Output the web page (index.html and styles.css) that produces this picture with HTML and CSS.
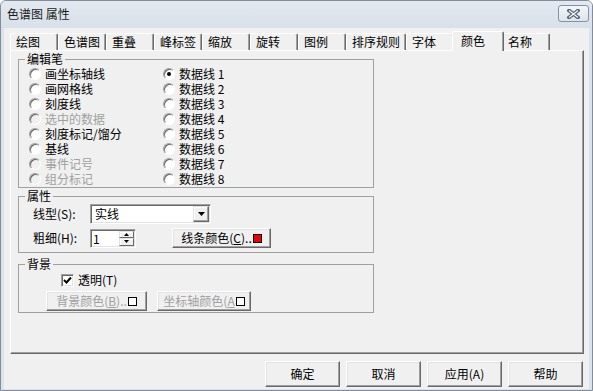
FILE: index.html
```html
<!DOCTYPE html>
<html lang="zh-CN">
<head>
    <meta charset="UTF-8">
    <title>色谱图 属性</title>
    <link rel="stylesheet" href="styles.css">
</head>
<body>
    <div class="window">
        <div class="titlebar">
            <span class="title">色谱图 属性</span>
            <div class="close">
                <svg width="13" height="10" viewBox="0 0 13 10">
                    <path d="M2 1.5 L11 8.5 M11 1.5 L2 8.5" stroke="#56616f" stroke-width="3.6" stroke-linecap="square"/>
                    <path d="M2 1.5 L11 8.5 M11 1.5 L2 8.5" stroke="#eef1f5" stroke-width="1.4"/>
                </svg>
            </div>
        </div>
        <div class="client">
            <div class="tabs">
                <div class="tab">绘图</div>
                <div class="tab">色谱图</div>
                <div class="tab">重叠</div>
                <div class="tab">峰标签</div>
                <div class="tab">缩放</div>
                <div class="tab">旋转</div>
                <div class="tab">图例</div>
                <div class="tab">排序规则</div>
                <div class="tab">字体</div>
                <div class="tab active">颜色</div>
                <div class="tab">名称</div>
            </div>

            <div class="panel">
                <fieldset class="group group-pen">
                    <legend>编辑笔</legend>
                    <div class="pen-cols">
                        <div class="col">
                            <label class="opt"><span class="radio"></span>画坐标轴线</label>
                            <label class="opt"><span class="radio"></span>画网格线</label>
                            <label class="opt"><span class="radio"></span>刻度线</label>
                            <label class="opt disabled"><span class="radio"></span>选中的数据</label>
                            <label class="opt"><span class="radio"></span>刻度标记/馏分</label>
                            <label class="opt"><span class="radio"></span>基线</label>
                            <label class="opt disabled"><span class="radio"></span>事件记号</label>
                            <label class="opt disabled"><span class="radio"></span>组分标记</label>
                        </div>
                        <div class="col">
                            <label class="opt"><span class="radio checked"></span>数据线 1</label>
                            <label class="opt"><span class="radio"></span>数据线 2</label>
                            <label class="opt"><span class="radio"></span>数据线 3</label>
                            <label class="opt"><span class="radio"></span>数据线 4</label>
                            <label class="opt"><span class="radio"></span>数据线 5</label>
                            <label class="opt"><span class="radio"></span>数据线 6</label>
                            <label class="opt"><span class="radio"></span>数据线 7</label>
                            <label class="opt"><span class="radio"></span>数据线 8</label>
                        </div>
                    </div>
                </fieldset>

                <fieldset class="group group-props">
                    <legend>属性</legend>
                    <div class="row">
                        <span class="lbl">线型(S):</span>
                        <div class="combo">
                            <span class="combo-text">实线</span>
                            <span class="combo-btn">
                                <svg width="7" height="4" viewBox="0 0 7 4"><path d="M0 0 H7 L3.5 4 Z" fill="#000"/></svg>
                            </span>
                        </div>
                    </div>
                    <div class="row row-gap">
                        <span class="lbl">粗细(H):</span>
                        <div class="spin">
                            <span class="spin-text">1</span>
                            <span class="spin-btns">
                                <span class="spin-btn"><svg width="5" height="3" viewBox="0 0 5 3"><path d="M2.5 0 L5 3 H0 Z" fill="#000"/></svg></span>
                                <span class="spin-btn"><svg width="5" height="3" viewBox="0 0 5 3"><path d="M0 0 H5 L2.5 3 Z" fill="#000"/></svg></span>
                            </span>
                        </div>
                        <div class="btn btn-line">线条颜色(<u>C</u>)..<span class="swatch red"></span></div>
                    </div>
                </fieldset>

                <fieldset class="group group-bg">
                    <legend>背景</legend>
                    <label class="check-row">
                        <span class="checkbox">
                            <svg width="9" height="9" viewBox="0 0 9 9"><path d="M1 4 L3.5 6.5 L8 1.5" stroke="#000" stroke-width="2" fill="none"/></svg>
                        </span>透明(T)
                    </label>
                    <div class="bg-buttons">
                        <div class="btn disabled btn-bg">背景颜色(<u>B</u>)..<span class="swatch"></span></div>
                        <div class="btn disabled btn-axis">坐标轴颜色(<u>A</u><span class="swatch"></span></div>
                    </div>
                </fieldset>
            </div>

            <div class="actions">
                <div class="btn btn-dlg">确定</div>
                <div class="btn btn-dlg">取消</div>
                <div class="btn btn-dlg">应用(A)</div>
                <div class="btn btn-dlg">帮助</div>
            </div>
        </div>
    </div>
</body>
</html>
```

FILE: styles.css
```css
body {
    margin: 0;
    font-family: "Noto Sans CJK SC", "Noto Sans", sans-serif;
    font-size: 12px;
    line-height: 14px;
    color: #000;
    background: #fff;
}
.window {
    width: 593px;
    height: 391px;
    box-sizing: border-box;
    border: 1px solid #838c97;
    border-radius: 6px 6px 0 0;
    background: #dae2ec;
    display: flex;
    flex-direction: column;
    overflow: hidden;
}
.titlebar {
    height: 27px;
    flex: none;
    display: flex;
    justify-content: space-between;
    align-items: flex-start;
    padding: 0 3px 0 6px;
    background: linear-gradient(#e3e9f0, #d8e0ea);
}
.title {
    margin-top: 6px;
    color: #1b1b1b;
}
.close {
    width: 31px;
    height: 17px;
    margin-top: 4px;
    box-sizing: border-box;
    border: 1px solid #8592a3;
    border-radius: 3px;
    background: linear-gradient(#f3f6f9, #dde4ec);
    display: flex;
    align-items: center;
    justify-content: center;
}
.client {
    flex: 1;
    margin: 0 3px 1px;
    padding: 3px 5px 2px 6px;
    background: #f0f0f0;
    display: flex;
    flex-direction: column;
}

/* tabs */
.tabs {
    display: flex;
    align-items: flex-end;
    height: 20px;
    margin-bottom: -1px;
}
.tab {
    height: 18px;
    min-width: 48px;
    box-sizing: border-box;
    padding: 0 5px;
    line-height: 16px;
    border-top: 1px solid #fff;
    border-left: 1px solid #fff;
    border-right: 1px solid #696969;
    border-radius: 2px 2px 0 0;
    box-shadow: inset -1px 0 #a0a0a0;
    white-space: nowrap;
}
.tab.active {
    height: 20px;
    min-width: 52px;
    margin: 0 -2px;
    padding-left: 8px;
    line-height: 18px;
    background: #f0f0f0;
    position: relative;
    z-index: 1;
}
.panel {
    height: 304px;
    box-sizing: border-box;
    border-top: 1px solid #fff;
    border-left: 1px solid #fff;
    border-right: 1px solid #696969;
    border-bottom: 1px solid #696969;
    box-shadow: inset -1px -1px #a0a0a0;
    background: #f0f0f0;
}

/* group boxes */
.group {
    width: 356px;
    box-sizing: border-box;
    margin: 0 0 0 7px;
    padding: 0;
    border: 1px solid #a0a0a0;
    min-inline-size: 0;
}
.group legend {
    line-height: 14px;
    padding: 0 2px;
    margin-left: 6px;
}
.group-pen {
    margin-top: 1px;
    padding-bottom: 1px;
}
.group-props {
    margin-top: 1px;
    padding-bottom: 4px;
}
.group-bg {
    margin-top: 4px;
    padding-bottom: 1px;
}
.pen-cols {
    display: flex;
    padding-left: 10px;
}
.col {
    width: 134px;
}
.opt {
    display: flex;
    align-items: center;
    gap: 4px;
    height: 15px;
    line-height: 15px;
    white-space: nowrap;
}
.opt.disabled {
    color: #a0a0a0;
}
.radio {
    width: 12px;
    height: 12px;
    box-sizing: border-box;
    border-radius: 50%;
    border: 1px solid;
    border-color: #a0a0a0 #fff #fff #a0a0a0;
    box-shadow: inset 1px 1px #696969;
    background: #fff;
    display: flex;
    align-items: center;
    justify-content: center;
}
.opt.disabled .radio {
    background: #f0f0f0;
}
.radio.checked::after {
    content: "";
    width: 4px;
    height: 4px;
    border-radius: 50%;
    background: #000;
}

/* properties */
.row {
    display: flex;
    align-items: center;
    height: 20px;
    margin-top: 1px;
    padding-left: 14px;
}
.row-gap {
    margin-top: 4px;
}
.lbl {
    width: 57px;
    white-space: nowrap;
}
.combo {
    width: 121px;
    height: 20px;
    box-sizing: border-box;
    padding: 1px 1px 1px 4px;
    border: 1px solid;
    border-color: #a0a0a0 #fff #fff #a0a0a0;
    box-shadow: inset 1px 1px #696969, inset -1px -1px #e3e3e3;
    background: #fff;
    display: flex;
    align-items: center;
}
.combo-btn {
    margin-left: auto;
    width: 16px;
    height: 16px;
    box-sizing: border-box;
    border: 1px solid;
    border-color: #e3e3e3 #696969 #696969 #e3e3e3;
    box-shadow: inset -1px -1px #a0a0a0, inset 1px 1px #fff;
    background: #f0f0f0;
    display: flex;
    align-items: center;
    justify-content: center;
}
.spin {
    width: 46px;
    height: 19px;
    box-sizing: border-box;
    padding: 1px;
    border: 1px solid;
    border-color: #a0a0a0 #fff #fff #a0a0a0;
    box-shadow: inset 1px 1px #696969, inset -1px -1px #e3e3e3;
    background: #fff;
    display: flex;
}
.spin-text {
    flex: 1;
    padding-left: 1px;
    line-height: 15px;
}
.spin-btns {
    width: 15px;
    display: flex;
    flex-direction: column;
}
.spin-btn {
    flex: 1;
    box-sizing: border-box;
    border: 1px solid;
    border-color: #e3e3e3 #696969 #696969 #e3e3e3;
    box-shadow: inset 1px 1px #fff;
    background: #f0f0f0;
    display: flex;
    align-items: center;
    justify-content: center;
}

/* buttons */
.btn {
    box-sizing: border-box;
    height: 20px;
    border: 1px solid;
    border-color: #fff #696969 #696969 #fff;
    box-shadow: inset -1px -1px #a0a0a0, inset 1px 1px #e3e3e3;
    background: #f0f0f0;
    display: flex;
    align-items: center;
    justify-content: center;
    white-space: nowrap;
}
.btn.disabled {
    color: #a0a0a0;
}
.btn-line {
    width: 99px;
    margin-left: 36px;
}
.swatch {
    width: 9px;
    height: 9px;
    box-sizing: border-box;
    border: 1px solid #000;
    background: #fff;
    margin-left: 1px;
}
.swatch.red {
    background: #f00000;
}

/* background group */
.check-row {
    display: flex;
    align-items: center;
    gap: 4px;
    height: 14px;
    margin-top: 2px;
    padding-left: 42px;
}
.checkbox {
    width: 13px;
    height: 13px;
    box-sizing: border-box;
    border: 1px solid;
    border-color: #a0a0a0 #fff #fff #a0a0a0;
    box-shadow: inset 1px 1px #696969, inset -1px -1px #e3e3e3;
    background: #fff;
    display: flex;
    align-items: center;
    justify-content: center;
}
.bg-buttons {
    display: flex;
    gap: 10px;
    margin-top: 4px;
    padding-left: 27px;
}
.btn-bg {
    width: 101px;
}
.btn-axis {
    width: 94px;
}

/* dialog buttons */
.actions {
    display: flex;
    justify-content: flex-end;
    gap: 6px;
    margin: 7px 1px 0 0;
}
.btn-dlg {
    width: 75px;
    height: 26px;
}
```
